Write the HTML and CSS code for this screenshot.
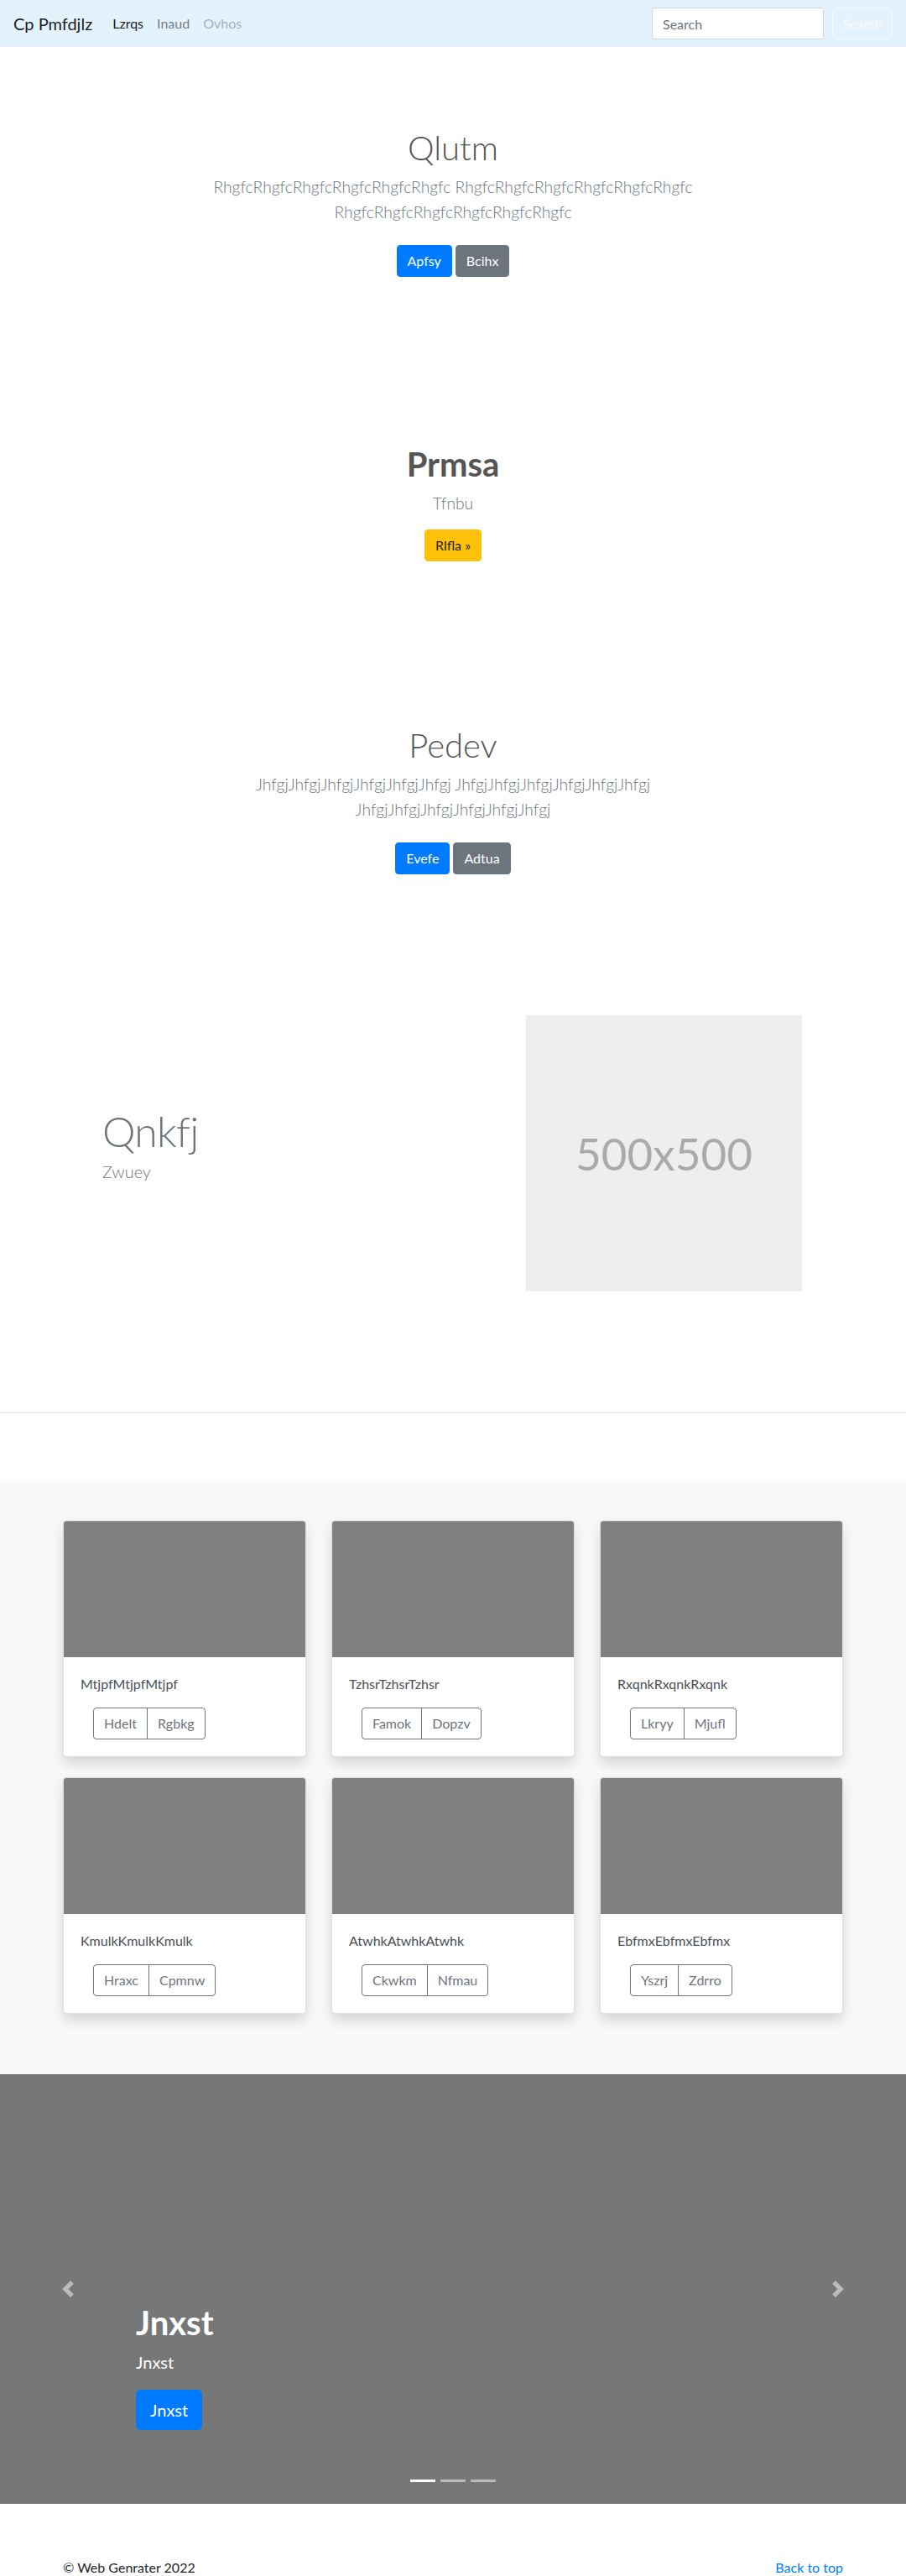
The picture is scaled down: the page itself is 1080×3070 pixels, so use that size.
FILE: index.html
```html
<!DOCTYPE html>
<html lang="en">
<head>
<meta charset="utf-8">
<title>Cp Pmfdjlz</title>
<link rel="stylesheet" href="styles.css">
</head>
<body>
<nav class="navbar">
  <a class="brand" href="#">Cp Pmfdjlz</a>
  <ul class="nav-links">
    <li><a class="nav-link active" href="#">Lzrqs</a></li>
    <li><a class="nav-link" href="#">Inaud</a></li>
    <li><a class="nav-link disabled" href="#">Ovhos</a></li>
  </ul>
  <form class="search">
    <input class="search-input" type="search" placeholder="Search">
    <button class="search-btn" type="button">Search</button>
  </form>
</nav>

<section class="hero hero-one">
  <h1 class="hero-title">Qlutm</h1>
  <p class="lead muted lead-gap">RhgfcRhgfcRhgfcRhgfcRhgfcRhgfc RhgfcRhgfcRhgfcRhgfcRhgfcRhgfc RhgfcRhgfcRhgfcRhgfcRhgfcRhgfc</p>
  <div class="btn-row"><a class="btn btn-primary" href="#">Apfsy</a><a class="btn btn-secondary" href="#">Bcihx</a></div>
</section>

<section class="hero hero-two">
  <h1 class="hero-title bold">Prmsa</h1>
  <p class="lead muted">Tfnbu</p>
  <div class="btn-row"><a class="btn btn-warning" href="#">Rlfla &raquo;</a></div>
</section>

<section class="hero hero-three">
  <h1 class="hero-title">Pedev</h1>
  <p class="lead muted lead-gap">JhfgjJhfgjJhfgjJhfgjJhfgjJhfgj JhfgjJhfgjJhfgjJhfgjJhfgjJhfgj JhfgjJhfgjJhfgjJhfgjJhfgjJhfgj</p>
  <div class="btn-row"><a class="btn btn-primary" href="#">Evefe</a><a class="btn btn-secondary" href="#">Adtua</a></div>
</section>

<section class="featurette">
  <div class="feat-text">
    <h2 class="feat-heading">Qnkfj</h2>
    <p class="lead muted feat-lead">Zwuey</p>
  </div>
  <div class="feat-media">
    <div class="placeholder">500x500</div>
  </div>
</section>

<hr class="divider">

<section class="album">
  <div class="card-grid">
    <div class="card">
      <div class="card-img"></div>
      <div class="card-body">
        <p class="card-text">MtjpfMtjpfMtjpf</p>
        <div class="btn-group"><a class="btn btn-outline" href="#">Hdelt</a><a class="btn btn-outline" href="#">Rgbkg</a></div>
      </div>
    </div>
    <div class="card">
      <div class="card-img"></div>
      <div class="card-body">
        <p class="card-text">TzhsrTzhsrTzhsr</p>
        <div class="btn-group"><a class="btn btn-outline" href="#">Famok</a><a class="btn btn-outline" href="#">Dopzv</a></div>
      </div>
    </div>
    <div class="card">
      <div class="card-img"></div>
      <div class="card-body">
        <p class="card-text">RxqnkRxqnkRxqnk</p>
        <div class="btn-group"><a class="btn btn-outline" href="#">Lkryy</a><a class="btn btn-outline" href="#">Mjufl</a></div>
      </div>
    </div>
    <div class="card">
      <div class="card-img"></div>
      <div class="card-body">
        <p class="card-text">KmulkKmulkKmulk</p>
        <div class="btn-group"><a class="btn btn-outline" href="#">Hraxc</a><a class="btn btn-outline" href="#">Cpmnw</a></div>
      </div>
    </div>
    <div class="card">
      <div class="card-img"></div>
      <div class="card-body">
        <p class="card-text">AtwhkAtwhkAtwhk</p>
        <div class="btn-group"><a class="btn btn-outline" href="#">Ckwkm</a><a class="btn btn-outline" href="#">Nfmau</a></div>
      </div>
    </div>
    <div class="card">
      <div class="card-img"></div>
      <div class="card-body">
        <p class="card-text">EbfmxEbfmxEbfmx</p>
        <div class="btn-group"><a class="btn btn-outline" href="#">Yszrj</a><a class="btn btn-outline" href="#">Zdrro</a></div>
      </div>
    </div>
  </div>
</section>

<section class="carousel">
  <a class="ctrl ctrl-prev" href="#" aria-label="Previous">
    <svg width="20" height="20" viewBox="0 0 8 8"><path fill="#fff" d="M5.25 0l-4 4 4 4 1.5-1.5L4.25 4l2.5-2.5L5.25 0z"/></svg>
  </a>
  <a class="ctrl ctrl-next" href="#" aria-label="Next">
    <svg width="20" height="20" viewBox="0 0 8 8"><path fill="#fff" d="M2.75 0l-1.5 1.5L3.75 4l-2.5 2.5L2.75 8l4-4-4-4z"/></svg>
  </a>
  <div class="caption">
    <h1 class="caption-title">Jnxst</h1>
    <p class="caption-text">Jnxst</p>
    <a class="btn btn-primary btn-lg" href="#">Jnxst</a>
  </div>
  <ol class="indicators">
    <li class="ind active"></li>
    <li class="ind"></li>
    <li class="ind"></li>
  </ol>
</section>

<footer class="footer">
  <p class="copy">&copy; Web Genrater 2022</p>
  <p class="back"><a href="#">Back to top</a></p>
</footer>
</body>
</html>
```

FILE: styles.css
```css
* { box-sizing: border-box; }

body {
  margin: 0;
  font-family: "Lato", "Open Sans", "Liberation Sans", sans-serif;
  font-size: 16px;
  line-height: 1.5;
  color: #212529;
  background: #fff;
}

a { text-decoration: none; }

/* navbar */
.navbar {
  height: 56px;
  background: #e3f2fd;
  display: flex;
  align-items: center;
  padding: 0 16px;
}
.brand {
  font-size: 20px;
  line-height: 30px;
  color: rgba(0, 0, 0, .9);
  margin-right: 16px;
}
.nav-links {
  display: flex;
  list-style: none;
  margin: 0;
  padding: 0;
  flex: 1;
}
.nav-link {
  display: block;
  padding: 8px;
  color: rgba(0, 0, 0, .5);
}
.nav-link.active { color: rgba(0, 0, 0, .9); }
.nav-link.disabled { color: rgba(0, 0, 0, .3); }

.search { display: flex; align-items: center; margin: 0; }
.search-input {
  width: 205px;
  height: 38px;
  padding: 6px 12px;
  border: 1px solid #ced4da;
  border-radius: 4px;
  font: inherit;
  color: #495057;
  background: #fff;
  margin-right: 10px;
}
.search-input::placeholder { color: #6c757d; }
.search-btn {
  width: 72px;
  height: 38px;
  border: 1px solid #f8f9fa;
  border-radius: 4px;
  background: transparent;
  color: #f8f9fa;
  font: inherit;
}

/* hero sections */
.hero { text-align: center; }
.hero-one { padding: 96px 0 103px; }
.hero-two { padding: 96px 0 99px; }
.hero-three { padding: 96px 0 24px; }

.hero-title {
  font-size: 40px;
  line-height: 48px;
  font-weight: 300;
  color: #555;
  margin: 0 0 8px;
}
.hero-title.bold { font-weight: 700; }

.lead {
  font-size: 19.3px;
  line-height: 30px;
  font-weight: 300;
  max-width: 640px;
  margin: 0 auto 16px;
}
.lead-gap { margin-bottom: 24px; }
.muted { color: #6c757d; }

.btn-row { display: flex; justify-content: center; gap: 4px; }

.btn {
  display: inline-block;
  padding: 6px 12px;
  font-size: 16px;
  line-height: 24px;
  border: 1px solid transparent;
  border-radius: 4px;
  text-align: center;
}
.btn-primary { background: #007bff; border-color: #007bff; color: #fff; }
.btn-secondary { background: #6c757d; border-color: #6c757d; color: #fff; }
.btn-warning { background: #ffc107; border-color: #ffc107; color: #212529; }

/* featurette */
.featurette {
  width: 960px;
  margin: 0 auto;
  padding-top: 144px;
  display: grid;
  grid-template-columns: 1fr 1fr;
}
.feat-text { padding: 113px 0 0 62px; }
.feat-heading {
  font-size: 50px;
  line-height: 1;
  font-weight: 300;
  letter-spacing: -0.8px;
  color: #6c757d;
  margin: 0 0 8px;
}
.feat-lead { margin: 0; text-align: left; font-size: 20px; }
.feat-media { display: flex; justify-content: flex-end; padding-right: 64px; }
.placeholder {
  width: 329px;
  height: 329px;
  background: #eee;
  color: #aaa;
  font-size: 53px;
  display: flex;
  align-items: center;
  justify-content: center;
}

.divider {
  margin: 144px 0 80px;
  border: 0;
  border-top: 1px solid rgba(0, 0, 0, .1);
}

/* album */
.album { background: #f8f9fa; padding: 48px 0 72px; }
.card-grid {
  width: 930px;
  margin: 0 auto;
  display: grid;
  grid-template-columns: repeat(3, 1fr);
  column-gap: 30px;
  row-gap: 24px;
}
.card {
  background: #fff;
  border: 1px solid rgba(0, 0, 0, .125);
  border-radius: 4px;
  overflow: hidden;
  box-shadow: 0 8px 16px rgba(0, 0, 0, .15);
}
.card-img { height: 162px; background: #808080; }
.card-body { padding: 20px; }
.card-text { margin: 0 0 16px; color: #495057; }
.btn-group { display: inline-flex; margin-left: 15px; }
.btn-outline {
  color: #6c757d;
  border-color: #6c757d;
  background: transparent;
}
.btn-group .btn-outline:first-child { border-top-right-radius: 0; border-bottom-right-radius: 0; }
.btn-group .btn-outline:last-child { border-top-left-radius: 0; border-bottom-left-radius: 0; margin-left: -1px; }

/* carousel */
.carousel {
  position: relative;
  height: 512px;
  background: #777;
  margin-bottom: 64px;
}
.ctrl {
  position: absolute;
  top: 0;
  bottom: 0;
  width: 15%;
  display: flex;
  align-items: center;
  justify-content: center;
  opacity: .5;
}
.ctrl-prev { left: 0; }
.ctrl-next { right: 0; }
.ctrl svg { display: block; }

.caption {
  position: absolute;
  left: 15%;
  right: 15%;
  bottom: 88px;
  color: #fff;
  text-align: left;
}
.caption-title {
  font-size: 40px;
  line-height: 48px;
  font-weight: 700;
  margin: 0 0 8px;
}
.caption-text {
  font-size: 20px;
  line-height: 30px;
  margin: 0 0 18px;
}
.btn-lg {
  padding: 8px 16px;
  font-size: 20px;
  line-height: 30px;
  border-radius: 5px;
}

.indicators {
  position: absolute;
  left: 0;
  right: 0;
  bottom: 26px;
  margin: 0;
  padding: 0;
  list-style: none;
  display: flex;
  justify-content: center;
}
.ind {
  width: 30px;
  height: 3px;
  margin: 0 3px;
  background: #fff;
  opacity: .5;
}
.ind.active { opacity: 1; }

/* footer */
.footer {
  width: 960px;
  margin: 0 auto;
  padding: 0 15px;
  display: flex;
  justify-content: space-between;
}
.footer p { margin: 0 0 16px; }
.back a { color: #007bff; }
```
